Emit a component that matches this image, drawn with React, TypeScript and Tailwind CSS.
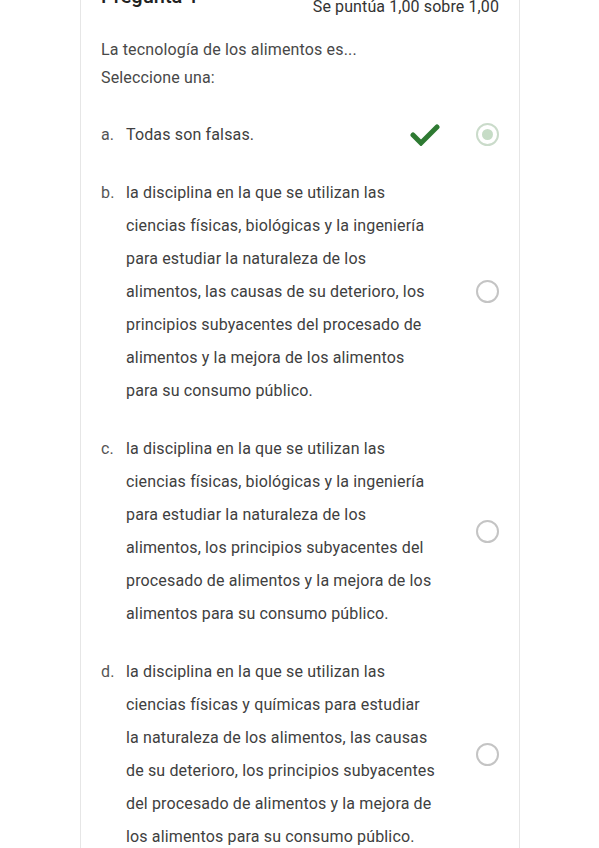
import React from "react";

const font = { fontFamily: "Roboto, 'Noto Sans', Arial, sans-serif" };

type Opt = { letter: string; lines: string[]; selected?: boolean; correct?: boolean };

const options: Opt[] = [
  { letter: "a.", lines: ["Todas son falsas."], selected: true, correct: true },
  {
    letter: "b.",
    lines: [
      "la disciplina en la que se utilizan las",
      "ciencias físicas, biológicas y la ingeniería",
      "para estudiar la naturaleza de los",
      "alimentos, las causas de su deterioro, los",
      "principios subyacentes del procesado de",
      "alimentos y la mejora de los alimentos",
      "para su consumo público.",
    ],
  },
  {
    letter: "c.",
    lines: [
      "la disciplina en la que se utilizan las",
      "ciencias físicas, biológicas y la ingeniería",
      "para estudiar la naturaleza de los",
      "alimentos, los principios subyacentes del",
      "procesado de alimentos y la mejora de los",
      "alimentos para su consumo público.",
    ],
  },
  {
    letter: "d.",
    lines: [
      "la disciplina en la que se utilizan las",
      "ciencias físicas y químicas para estudiar",
      "la naturaleza de los alimentos, las causas",
      "de su deterioro, los principios subyacentes",
      "del procesado de alimentos y la mejora de",
      "los alimentos para su consumo público.",
    ],
  },
];

function Check() {
  return (
    <svg width="30" height="22" viewBox="0 0 30 22" className="shrink-0">
      <path d="M3 11 L11 19 L27 3" fill="none" stroke="#2e7a32" strokeWidth="5" strokeLinecap="round" strokeLinejoin="miter" />
    </svg>
  );
}

function Radio({ selected }: { selected?: boolean }) {
  if (selected) {
    return (
      <div className="w-[23px] h-[23px] rounded-full border-2 border-[#cadbca] flex items-center justify-center shrink-0">
        <div className="w-[11px] h-[11px] rounded-full bg-[#c6dcc6]" />
      </div>
    );
  }
  return <div className="w-[23px] h-[23px] rounded-full border-2 border-[#c4c4c4] shrink-0" />;
}

export default function App() {
  return (
    <div className="h-[848px] bg-white overflow-hidden" style={font}>
      <div className="ml-[80px] w-[440px] border-x border-[#e6e6e6] px-[20px] -mt-[20px] pb-[40px]">
        <div className="flex justify-between items-start">
          <div className="text-[20px] leading-[28px] text-[#222] font-medium mt-[2px]">Pregunta 1</div>
          <div className="text-[16px] leading-[24px] text-[#333] mt-[15px] tracking-[0.1px]">Se puntúa 1,00 sobre 1,00</div>
        </div>
        <div className="mt-[17px] text-[16px] leading-[28px] text-[#484848] tracking-[0.15px]">
          <div>La tecnología de los alimentos es...</div>
          <div>Seleccione una:</div>
        </div>
        <div className="mt-[26px] flex flex-col gap-[25px]">
          {options.map((o) => (
            <div key={o.letter} className="flex items-center text-[16px] leading-[33px] text-[#404040] tracking-[0.15px]">
              <div className="flex flex-1 self-stretch">
                <div className="w-[25px] shrink-0 text-[#555]">{o.letter}</div>
                <div className="flex-1">
                  {o.lines.map((l, i) => (
                    <div key={i} className="whitespace-nowrap">{l}</div>
                  ))}
                </div>
              </div>
              {o.correct && <div className="mr-[36px]"><Check /></div>}
              <Radio selected={o.selected} />
            </div>
          ))}
        </div>
      </div>
    </div>
  );
}
